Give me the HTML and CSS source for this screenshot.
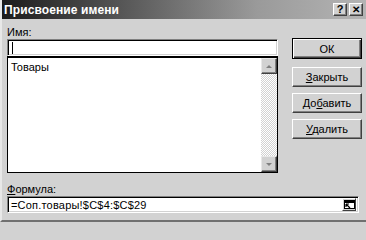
FILE: index.html
```html
<!DOCTYPE html>
<html lang="ru">
<head>
<meta charset="utf-8">
<title>Присвоение имени</title>
<link rel="stylesheet" href="styles.css">
</head>
<body>
<div class="window">
  <div class="titlebar">
    <span class="title">Присвоение имени</span>
    <div class="caption-btns">
      <span class="cap-btn">?</span>
      <span class="cap-btn close">✕</span>
    </div>
  </div>
  <div class="content">
    <div class="top">
      <div class="left">
        <div class="label">Имя:</div>
        <div class="field name-field"><span class="caret"></span></div>
        <div class="listbox">
          <div class="items"><div class="item">Товары</div></div>
          <div class="scrollbar">
            <div class="sb-btn"><span class="tri up"></span></div>
            <div class="sb-track"></div>
            <div class="sb-btn"><span class="tri down"></span></div>
          </div>
        </div>
      </div>
      <div class="buttons">
        <div class="btn default"><span class="btn-face">ОК</span></div>
        <div class="btn"><span class="btn-face"><u>З</u>акрыть</span></div>
        <div class="btn"><span class="btn-face">До<u>б</u>авить</span></div>
        <div class="btn"><span class="btn-face"><u>У</u>далить</span></div>
      </div>
    </div>
    <div class="label formula-label"><u>Ф</u>ормула:</div>
    <div class="field formula-field">
      <span class="formula">=Соп.товары!$C$4:$C$29</span>
      <span class="ref-btn">
        <svg width="11" height="9" viewBox="0 0 11 9">
          <rect x="0.5" y="0.5" width="10" height="8" fill="#fff" stroke="#000"/>
          <rect x="1" y="1" width="9" height="2" fill="#000"/>
          <path d="M2 4 L6 8 M2 4 L2 7 M2 4 L5 4" stroke="#000" stroke-width="1.2" fill="none"/>
        </svg>
      </span>
    </div>
  </div>
</div>
</body>
</html>
```

FILE: styles.css
```css
html, body {
  margin: 0;
  padding: 0;
  background: #d2d2d2;
}
body {
  font-family: "Liberation Sans", Arial, sans-serif;
  font-size: 11px;
  color: #000;
}
.window {
  width: 366px;
  height: 222px;
  box-sizing: border-box;
  background: #d2d2d2;
  border-left: 2px solid #e8e8e8;
  border-bottom: 2px solid #707070;
  display: flex;
  flex-direction: column;
}
.titlebar {
  height: 19px;
  background: linear-gradient(to right, #1c1c1c 0%, #5a5a5a 35%, #9a9a9a 70%, #b4b4b4 100%);
  display: flex;
  align-items: center;
  justify-content: space-between;
  padding: 0 3px 0 2px;
}
.title {
  color: #fff;
  font-weight: bold;
  font-size: 12px;
  letter-spacing: 0.1px;
}
.caption-btns {
  display: flex;
  gap: 2px;
}
.cap-btn {
  width: 14px;
  height: 13px;
  box-sizing: border-box;
  background: #d2d2d2;
  border-top: 1px solid #fff;
  border-left: 1px solid #fff;
  border-right: 1px solid #404040;
  border-bottom: 1px solid #404040;
  box-shadow: inset -1px -1px 0 #808080;
  font-size: 11px;
  font-weight: bold;
  line-height: 11px;
  text-align: center;
}
.cap-btn.close {
  font-size: 10px;
}
.content {
  flex: 1;
  padding: 6px 4px 0 5px;
  display: flex;
  flex-direction: column;
}
.top {
  display: flex;
  gap: 14px;
}
.left {
  width: 271px;
  display: flex;
  flex-direction: column;
}
.label {
  height: 14px;
  line-height: 14px;
}
.label u, .btn u {
  text-decoration: underline;
}
.field {
  background: #fff;
  box-sizing: border-box;
  border-top: 1px solid #808080;
  border-left: 1px solid #808080;
  border-right: 1px solid #fff;
  border-bottom: 1px solid #fff;
  box-shadow: inset 1px 1px 0 #000, inset -1px -1px 0 #d2d2d2;
}
.name-field {
  height: 17px;
  display: flex;
  align-items: center;
  padding-left: 4px;
}
.caret {
  width: 1px;
  height: 12px;
  background: #000;
}
.listbox {
  height: 117px;
  box-sizing: border-box;
  background: #fff;
  border: 1px solid #000;
  border-top-width: 2px;
  display: flex;
}
.items {
  flex: 1;
  padding: 3px 0 0 3px;
}
.item {
  line-height: 13px;
}
.scrollbar {
  width: 16px;
  display: flex;
  flex-direction: column;
}
.sb-btn {
  height: 16px;
  box-sizing: border-box;
  background: #d2d2d2;
  border-top: 1px solid #e8e8e8;
  border-left: 1px solid #e8e8e8;
  border-right: 1px solid #404040;
  border-bottom: 1px solid #404040;
  box-shadow: inset -1px -1px 0 #808080;
  display: flex;
  align-items: center;
  justify-content: center;
}
.tri {
  width: 0;
  height: 0;
  border-left: 3px solid transparent;
  border-right: 3px solid transparent;
}
.tri.up {
  border-bottom: 3px solid #808080;
}
.tri.down {
  border-top: 3px solid #808080;
}
.sb-track {
  flex: 1;
  background: repeating-conic-gradient(#ffffff 0 25%, #d2d2d2 0 50%) 0 0 / 2px 2px;
}
.buttons {
  display: flex;
  flex-direction: column;
  gap: 6px;
  margin-top: 13px;
}
.btn {
  width: 70px;
  height: 20px;
  box-sizing: border-box;
  background: #d2d2d2;
  border-top: 1px solid #fff;
  border-left: 1px solid #fff;
  border-right: 1px solid #404040;
  border-bottom: 1px solid #404040;
  box-shadow: inset -1px -1px 0 #808080;
  display: flex;
  align-items: center;
  justify-content: center;
}
.btn.default {
  height: 21px;
  border: 1px solid #000;
  box-shadow: inset 1px 1px 0 #fff, inset -1px -1px 0 #404040, inset -2px -2px 0 #808080;
  margin-bottom: 2px;
}
.btn-face {
  line-height: 12px;
}
.formula-label {
  margin-top: 9px;
}
.formula-field {
  width: 352px;
  height: 17px;
  margin-top: 0;
  display: flex;
  align-items: center;
  justify-content: space-between;
  padding: 0 2px 0 3px;
}
.formula {
  letter-spacing: 0.2px;
}
.ref-btn {
  width: 14px;
  height: 13px;
  box-sizing: border-box;
  background: #d2d2d2;
  border-top: 1px solid #fff;
  border-left: 1px solid #fff;
  border-right: 1px solid #404040;
  border-bottom: 1px solid #404040;
  display: flex;
  align-items: center;
  justify-content: center;
}
```
